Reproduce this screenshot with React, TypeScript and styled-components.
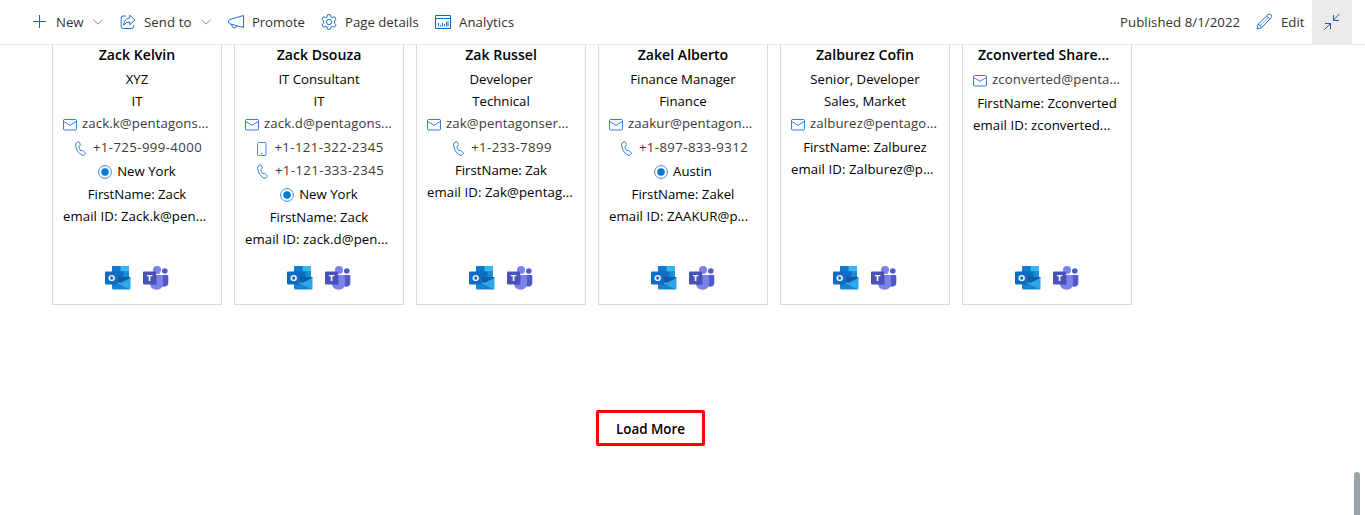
import React from 'react';
import styled, { createGlobalStyle } from 'styled-components';

const GlobalStyle = createGlobalStyle`
  * { box-sizing: border-box; }
  html, body { margin: 0; background: #fff; overflow: hidden; }
  body { font-family: 'Open Sans', 'Noto Sans', sans-serif; font-size: 13.2px; color: #000; }
`;

const Page = styled.div`
  position: relative;
  display: flex;
  flex-direction: column;
  width: 1365px;
  height: 515px;
  overflow: hidden;
`;

const CommandBar = styled.header`
  display: flex;
  align-items: center;
  flex: none;
  height: 45px;
  padding: 0 13px 1px 32px;
  border-bottom: 1px solid #eaeaea;
  color: #323130;
`;

const Command = styled.div<{ $width: number }>`
  display: flex;
  align-items: center;
  width: ${(p) => p.$width}px;
  height: 44px;
  svg { flex: none; }
`;

const CommandLabel = styled.span<{ $width: number; $track?: number }>`
  width: ${(p) => p.$width}px;
  margin-left: 8px;
  white-space: nowrap;
  letter-spacing: ${(p) => p.$track ?? 0}px;
`;

const Published = styled.span`
  width: 136px;
  margin-left: auto;
  letter-spacing: 0.07px;
  white-space: nowrap;
`;

const CollapseButton = styled.button`
  display: flex;
  align-items: center;
  justify-content: center;
  width: 40px;
  height: 44px;
  padding: 0;
  border: 0;
  background: #edebe9;
`;

const CardRow = styled.main`
  display: flex;
  gap: 12px;
  flex: none;
  padding-left: 52px;
`;

const Card = styled.article`
  display: flex;
  flex-direction: column;
  width: 170px;
  height: 260px;
  padding: 0 10px;
  border: 1px solid #dadada;
  border-top: 0;
`;

const Name = styled.h3<{ $left?: boolean }>`
  height: 23px;
  margin: 0;
  padding-left: ${(p) => (p.$left ? 5 : 0)}px;
  font-size: 14.1px;
  font-weight: 600;
  line-height: 20px;
  text-align: ${(p) => (p.$left ? 'left' : 'center')};
  white-space: nowrap;
`;

const Row = styled.div<{ $height: number; $left?: boolean; $muted?: boolean; $gap?: number }>`
  display: flex;
  align-items: center;
  justify-content: ${(p) => (p.$left ? 'flex-start' : 'center')};
  gap: ${(p) => p.$gap ?? 0}px;
  height: ${(p) => p.$height}px;
  color: ${(p) => (p.$muted ? '#3b3a39' : '#000')};
  white-space: nowrap;
  svg { flex: none; margin-top: 2px; }
`;

const PhoneRow = styled(Row)`
  padding-left: 3px;
`;

const Value = styled.span<{ $track?: number }>`
  line-height: 20px;
  letter-spacing: ${(p) => p.$track ?? 0}px;
`;

const LinkValue = styled(Value)`
  padding-bottom: 2px;
`;

const Actions = styled.div`
  display: flex;
  justify-content: center;
  gap: 12px;
  margin-top: auto;
  padding-bottom: 14px;
`;

const LoadMore = styled.button`
  align-self: flex-start;
  width: 109px;
  height: 36px;
  margin: 105px 0 0 596px;
  padding: 2px 0 0;
  border: 3px solid #f00;
  border-radius: 2px;
  background: #fff;
  color: #000;
  font: 600 13.4px 'Open Sans', sans-serif;
`;

const ScrollThumb = styled.div`
  position: absolute;
  top: 472px;
  left: 1354px;
  width: 6px;
  height: 60px;
  border-radius: 3px;
  background: #9aa4ab;
`;

const BLUE = '#1f6fd0';

const PlusIcon = () => (
  <svg width="16" height="16" viewBox="0 0 16 16" stroke="#0f6cbd" fill="none">
    <path d="M7.5 1v13M1 7.5h13" />
  </svg>
);

const ChevronIcon = () => (
  <svg width="12" height="8" viewBox="0 0 12 8" stroke="#8296a8" fill="none">
    <path d="M1.3 1.5 6 6.2l4.700-4.700" />
  </svg>
);

const ShareIcon = () => (
  <svg width="16" height="16" viewBox="0 0 16 16" stroke={BLUE} fill="none" strokeLinejoin="round">
    <path d="M6 2H3.200Q1.200 2 1.200 4v8.500q0 2 2 2h8.500q2 0 2-2V11" />
    <path d="M9.700 1.200 15 6l-5.300 4.700V8Q5.800 7.700 3.700 11.300 4.200 4.400 9.700 3.900Z" />
  </svg>
);

const MegaphoneIcon = () => (
  <svg width="16" height="16" viewBox="0 0 16 16" stroke={BLUE} fill="none" strokeLinejoin="round">
    <path d="M15.500 1.500v12L1.500 9.700Q.6 9.300.6 8.300V7q0-1 .9-1.400Z" />
    <path d="M3.500 10.300q.4 3.700 2.700 3.700 2.200 0 2.500-2.300" />
  </svg>
);

const GearIcon = () => (
  <svg width="16" height="16" viewBox="0 0 16 16" stroke={BLUE} fill="none" strokeLinejoin="round">
    <path d="M6.600.7h2.800l.5 2.200 1.300.7 2.200-.8 1.700 2.500-1.700 1.600v2.200l1.700 1.600-1.700 2.500-2.200-.8-1.300.7-.5 2.200H6.600l-.5-2.200-1.300-.7-2.200.8L.9 10.700l1.700-1.600V6.900L.9 5.300l1.700-2.500 2.200.8 1.300-.7Z" />
    <circle cx="8" cy="8" r="2.600" />
  </svg>
);

const AnalyticsIcon = () => (
  <svg width="16" height="14" viewBox="0 0 16 14" stroke="#0f6cbd" fill="none">
    <path d="M.5.5h15v13H.5ZM.5 3.500h15" />
    <path d="M3.500 11.500V8M5.500 11.500V10M7.500 11.500V8M9.500 11.500V9M11.500 11.500V7M13 11.500V6" strokeWidth=".9" />
  </svg>
);

const PencilIcon = () => (
  <svg width="17" height="17" viewBox="0 0 17 17" stroke={BLUE} fill="none" strokeLinejoin="round">
    <path d="M1 16l1-4.700L12 1.500q1.500-1.200 3 .2 1.400 1.500.2 3L5.500 14.800ZM10.500 3l3.300 3.300M2 11.300q2.700.5 3.500 3.500" />
    <path d="M4.200 12.600l8-8" strokeWidth=".6" />
  </svg>
);

const CollapseIcon = () => (
  <svg width="18" height="18" viewBox="0 0 18 18" stroke="#1b5a9e" fill="none">
    <path d="M16.500 1 10.500 7M10.500 2v5.500H16M1.500 16.500l6-6M2 10.500h5.500V16" />
  </svg>
);

const MailIcon = () => (
  <svg width="14" height="12" viewBox="0 0 14 12" stroke={BLUE} strokeWidth=".9" fill="none">
    <rect x=".5" y=".5" width="13" height="10.500" rx="1" />
    <path d="M.7 2.500 7 6.300l6.300-3.800" />
  </svg>
);

const PhoneIcon = () => (
  <svg width="12" height="15" viewBox="0 0 12 15" stroke={BLUE} strokeWidth=".9" fill="none" strokeLinejoin="round">
    <path d="M1.300 1.900 3.200.8q.8-.3 1.200.5l.8 2q.2.700-.3 1.200l-.9.900q-.2 2 1.800 4.300l1.300-.3q.7-.1 1.200.5l1.800 1.800q.5.700 0 1.300l-.9.900q-.9.700-2.300.2Q1.700 11.300.7 4.800.5 2.800 1.300 1.900Z" />
  </svg>
);

const MobileIcon = () => (
  <svg width="10" height="14" viewBox="0 0 10 14" stroke="#2a86dc" strokeWidth=".9" fill="none">
    <rect x=".5" y=".5" width="8.500" height="13" rx="1" />
    <path d="M4 11.500h1.500" />
  </svg>
);

const LocationIcon = () => (
  <svg width="14" height="14" viewBox="0 0 14 14" fill="none">
    <circle cx="7" cy="7" r="6.400" stroke="#2a7bd3" strokeWidth=".9" />
    <circle cx="7" cy="7" r="3.800" fill="#0078d4" />
  </svg>
);

const OutlookLogo = () => (
  <svg width="26" height="24" viewBox="0 0 26 24">
    <path d="M8 0h15q1 0 1 1v13H7V1q0-1 1-1Z" fill="#0f6cbd" />
    <path d="M7 1q0-1 1-1h7.500v5.500H7Z" fill="#0f78d0" />
    <path d="M15.500 0H23q1 0 1 1v4.500h-8.500Z" fill="#35b8f1" />
    <path d="M13 5.500h5.500V11H13Z" fill="#0f6cbd" />
    <path d="M18.500 5.500H24V11h-5.500Z" fill="#1490df" />
    <path d="M7 11h18.500v1L17 17.500 7 15Z" fill="#125ca6" />
    <path d="M25.500 12V22.500q0 1-1 1L14 17.500Z" fill="#2ba6e8" />
    <path d="M7 13.500 25 23.500H8.500Q7 23.500 7 22Z" fill="#1683d3" />
    <rect y="5.500" width="13" height="13" rx="1" fill="#0f6cc4" />
    <text x="6.500" y="15.300" textAnchor="middle" fontFamily="Open Sans" fontWeight="700" fontSize="9" fill="#fff">O</text>
  </svg>
);

const TeamsLogo = () => (
  <svg width="26" height="24" viewBox="0 0 26 24">
    <circle cx="21.800" cy="5" r="2.800" fill="#5059c9" />
    <path d="M17 9h7.300q1 0 1 1v6.500q0 4-3.800 4.200Q17 20.700 17 16Z" fill="#5059c9" />
    <circle cx="14" cy="4" r="4" fill="#7b83eb" />
    <path d="M8 9h11q1 0 1 1v7q0 6.500-6.300 6.700Q7 23.500 7 17v-7q0-1 1-1Z" fill="#7b83eb" />
    <path d="M7 9h7v9q0 1-1 1H7.500Q7 18 7 17Z" fill="#606ad2" />
    <rect y="5.500" width="13" height="13" rx="1" fill="#4a52b8" />
    <text x="6.500" y="15.300" textAnchor="middle" fontFamily="Open Sans" fontWeight="700" fontSize="9.500" fill="#fff">T</text>
  </svg>
);

type Person = {
  name: string;
  role?: string;
  department?: string;
  mail: string;
  mobile?: string;
  phone?: string;
  office?: string;
  firstName: string;
  emailId: string;
};

const people: Person[] = [
  { name: 'Zack Kelvin', role: 'XYZ', department: 'IT', mail: 'zack.k@pentagons...', phone: '+1-725-999-4000', office: 'New York', firstName: 'Zack', emailId: 'Zack.k@pen...' },
  { name: 'Zack Dsouza', role: 'IT Consultant', department: 'IT', mail: 'zack.d@pentagons...', mobile: '+1-121-322-2345', phone: '+1-121-333-2345', office: 'New York', firstName: 'Zack', emailId: 'zack.d@pen...' },
  { name: 'Zak Russel', role: 'Developer', department: 'Technical', mail: 'zak@pentagonser...', phone: '+1-233-7899', firstName: 'Zak', emailId: 'Zak@pentag...' },
  { name: 'Zakel Alberto', role: 'Finance Manager', department: 'Finance', mail: 'zaakur@pentagon...', phone: '+1-897-833-9312', office: 'Austin', firstName: 'Zakel', emailId: 'ZAAKUR@p...' },
  { name: 'Zalburez Cofin', role: 'Senior, Developer', department: 'Sales, Market', mail: 'zalburez@pentago...', firstName: 'Zalburez', emailId: 'Zalburez@p...' },
  { name: 'Zconverted Share...', mail: 'zconverted@penta...', firstName: 'Zconverted', emailId: 'zconverted...' },
];

const PersonCard = ({ person }: { person: Person }) => (
  <Card>
    <Name $left={person.name.endsWith('...')}>{person.name}</Name>
    {person.role && <Row $height={22}><Value>{person.role}</Value></Row>}
    {person.department && <Row $height={22}><Value>{person.department}</Value></Row>}
    <Row $height={24} $left $muted $gap={5}><MailIcon /><LinkValue $track={0.12}>{person.mail}</LinkValue></Row>
    {person.mobile && <PhoneRow $height={23} $muted $gap={7}><MobileIcon /><LinkValue $track={0.4}>{person.mobile}</LinkValue></PhoneRow>}
    {person.phone && <PhoneRow $height={23} $muted $gap={6}><PhoneIcon /><LinkValue $track={0.4}>{person.phone}</LinkValue></PhoneRow>}
    {person.office && <Row $height={24} $gap={5}><LocationIcon /><Value>{person.office}</Value></Row>}
    <Row $height={22}><Value>FirstName: {person.firstName}</Value></Row>
    <Row $height={22} $left><Value $track={0.08}>email ID: {person.emailId}</Value></Row>
    <Actions><OutlookLogo /><TeamsLogo /></Actions>
  </Card>
);

export default function App() {
  return (
    <Page>
      <GlobalStyle />
      <CommandBar>
        <Command $width={88}><PlusIcon /><CommandLabel $width={36}>New</CommandLabel><ChevronIcon /></Command>
        <Command $width={108}><ShareIcon /><CommandLabel $width={56} $track={0.1}>Send to</CommandLabel><ChevronIcon /></Command>
        <Command $width={93}><MegaphoneIcon /><CommandLabel $width={60} $track={-0.1}>Promote</CommandLabel></Command>
        <Command $width={114}><GearIcon /><CommandLabel $width={80}>Page details</CommandLabel></Command>
        <Command $width={90}><AnalyticsIcon /><CommandLabel $width={60} $track={0.08}>Analytics</CommandLabel></Command>
        <Published>Published 8/1/2022</Published>
        <Command $width={56}><PencilIcon /><CommandLabel $width={28}>Edit</CommandLabel></Command>
        <CollapseButton aria-label="Collapse"><CollapseIcon /></CollapseButton>
      </CommandBar>
      <CardRow>
        {people.map((person) => <PersonCard key={person.name} person={person} />)}
      </CardRow>
      <LoadMore>Load More</LoadMore>
      <ScrollThumb />
    </Page>
  );
}
